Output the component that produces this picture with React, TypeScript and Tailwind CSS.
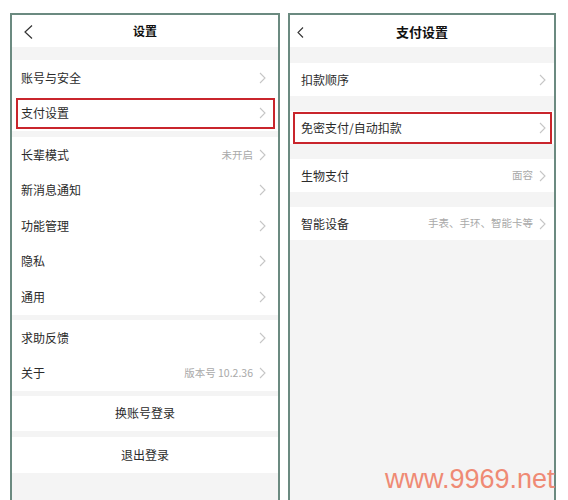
import React from "react";

const Chevron = () => (
  <svg width="7" height="12" viewBox="0 0 7 12" className="shrink-0">
    <path d="M1 1l5 5-5 5" stroke="#c6c6c6" fill="none" strokeWidth="1.1" />
  </svg>
);

const Back = ({ small }: { small?: boolean }) =>
  small ? (
    <svg width="7" height="11" viewBox="0 0 7 11">
      <path d="M6 0.5L1 5.5l5 5" stroke="#333" fill="none" strokeWidth="1.1" />
    </svg>
  ) : (
    <svg width="9" height="14" viewBox="0 0 9 14">
      <path d="M8 0.5L1 7l7 6.5" stroke="#333" fill="none" strokeWidth="1.2" />
    </svg>
  );

interface RowProps {
  label: string;
  value?: string;
  highlight?: boolean;
  tall?: boolean;
}

const Row = ({ label, value, highlight, tall }: RowProps) => (
  <div
    className={`relative flex items-center bg-white ${
      tall ? "h-[35.5px] pl-[9px] pr-[12px]" : "h-[33px] pl-[11px] pr-[8px]"
    }`}
  >
    <span className="flex-1 text-[12px] leading-none text-[#2b2b2b]">{label}</span>
    {value && (
      <span className="mr-[6px] text-[10.5px] leading-none text-[#a9a9a9]">
        {value}
      </span>
    )}
    <Chevron />
    {highlight && (
      <div
        className={`absolute border-2 border-[#c9252c] ${
          tall
            ? "left-[4px] right-[3px] top-[2px] bottom-[2px]"
            : "left-[3px] right-[2px] top-[1px] bottom-0"
        }`}
      />
    )}
  </div>
);

const Header = ({ title, small }: { title: string; small?: boolean }) => (
  <div className="relative flex h-[32px] items-center justify-center bg-white">
    <div className={`absolute ${small ? "left-[7px] top-[12px]" : "left-[12px] top-[10px]"}`}>
      <Back small={small} />
    </div>
    <span
      className={`font-bold leading-none text-[#111] ${
        small ? "text-[13px]" : "text-[12px]"
      }`}
    >
      {title}
    </span>
  </div>
);

const Button = ({ label }: { label: string }) => (
  <div className="flex h-[35.5px] items-center justify-center bg-white text-[12px] leading-none text-[#2b2b2b]">
    {label}
  </div>
);

export default function App() {
  return (
    <div
      className="relative flex h-[500px] w-[568px] gap-[8px] overflow-hidden bg-white pl-[10px] pt-[13px]"
      style={{ fontFamily: '"Noto Sans CJK SC", "Noto Sans", sans-serif' }}
    >
      <div className="flex h-[500px] w-[270px] flex-col border-x-2 border-t-2 border-[#6b8a80] bg-[#f4f4f4]">
        <Header title="设置" />
        <div className="h-[13px]" />
        <Row tall label="账号与安全" />
        <Row tall label="支付设置" highlight />
        <div className="h-[6px]" />
        <Row tall label="长辈模式" value="未开启" />
        <Row tall label="新消息通知" />
        <Row tall label="功能管理" />
        <Row tall label="隐私" />
        <Row tall label="通用" />
        <div className="h-[5.5px]" />
        <Row tall label="求助反馈" />
        <Row tall label="关于" value="版本号 10.2.36" />
        <div className="h-[4.5px]" />
        <Button label="换账号登录" />
        <div className="h-[6px]" />
        <Button label="退出登录" />
      </div>
      <div className="flex h-[500px] w-[268px] flex-col border-x-2 border-t-2 border-[#6b8a80] bg-[#f4f4f4]">
        <Header title="支付设置" small />
        <div className="h-[16px]" />
        <Row label="扣款顺序" />
        <div className="h-[15px]" />
        <Row label="免密支付/自动扣款" highlight />
        <div className="h-[15px]" />
        <Row label="生物支付" value="面容" />
        <div className="h-[15px]" />
        <Row label="智能设备" value="手表、手环、智能卡等" />
      </div>
      <div
        className="absolute left-[385px] top-[466px] text-[27px] leading-none text-[#ef8a74]"
        style={{ fontFamily: '"Liberation Sans", Arial, sans-serif' }}
      >
        www.9969.net
      </div>
    </div>
  );
}
